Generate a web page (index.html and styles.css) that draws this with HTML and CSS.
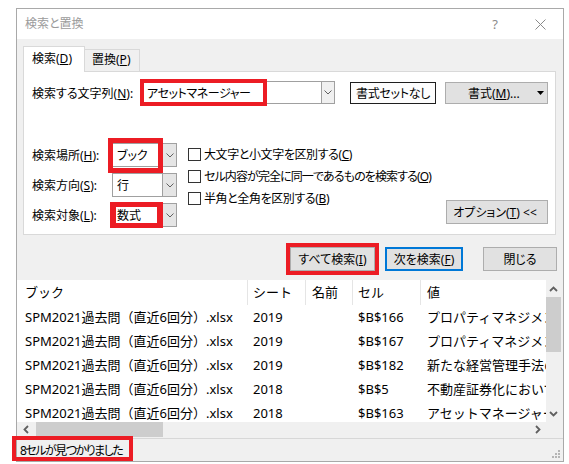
FILE: index.html
```html
<!DOCTYPE html>
<html lang="ja">
<head>
<meta charset="utf-8">
<title>検索と置換</title>
<link rel="stylesheet" href="styles.css">
</head>
<body>
<div class="dialog">
  <div class="titlebar">
    <span class="title">検索と置換</span>
    <span class="tb-btn help">?</span>
    <span class="tb-btn close"><svg width="11" height="11" viewBox="0 0 11 11"><path d="M0.5 0.5 L10.5 10.5 M10.5 0.5 L0.5 10.5" stroke="#8a8a8a" stroke-width="1" fill="none"/></svg></span>
  </div>

  <div class="tabs">
    <div class="tab active">検索(<u>D</u>)</div>
    <div class="tab">置換(<u>P</u>)</div>
  </div>

  <div class="panel">
    <div class="find-row">
      <span class="find-label">検索する文字列(<u>N</u>):</span>
      <div class="combo combo-find">
        <span class="combo-text">アセットマネージャー</span>
        <span class="combo-btn"><svg width="8" height="5" viewBox="0 0 8 5"><polyline points="0.5,0.5 4,4 7.5,0.5" fill="none" stroke="#606060" stroke-width="1"/></svg></span>
      </div>
      <button class="btn btn-noformat">書式セットなし</button>
      <button class="btn btn-format"><span>書式(<u>M</u>)...</span><svg class="caret" width="7" height="4" viewBox="0 0 7 4"><polygon points="0,0 7,0 3.5,4" fill="#000"/></svg></button>
    </div>

    <div class="options">
      <div class="opt-grid">
        <span class="opt-label">検索場所(<u>H</u>):</span>
        <div class="combo combo-small">
          <span class="combo-text">ブック</span>
          <span class="combo-btn"><svg width="8" height="5" viewBox="0 0 8 5"><polyline points="0.5,0.5 4,4 7.5,0.5" fill="none" stroke="#606060" stroke-width="1"/></svg></span>
        </div>
        <span class="opt-label">検索方向(<u>S</u>):</span>
        <div class="combo combo-small">
          <span class="combo-text">行</span>
          <span class="combo-btn"><svg width="8" height="5" viewBox="0 0 8 5"><polyline points="0.5,0.5 4,4 7.5,0.5" fill="none" stroke="#606060" stroke-width="1"/></svg></span>
        </div>
        <span class="opt-label">検索対象(<u>L</u>):</span>
        <div class="combo combo-small">
          <span class="combo-text">数式</span>
          <span class="combo-btn"><svg width="8" height="5" viewBox="0 0 8 5"><polyline points="0.5,0.5 4,4 7.5,0.5" fill="none" stroke="#606060" stroke-width="1"/></svg></span>
        </div>
      </div>

      <div class="checks">
        <div class="check"><span class="box"></span><span class="check-label">大文字と小文字を区別する(<u>C</u>)</span></div>
        <div class="check"><span class="box"></span><span class="check-label tight">セル内容が完全に同一であるものを検索する(<u>O</u>)</span></div>
        <div class="check"><span class="box"></span><span class="check-label">半角と全角を区別する(<u>B</u>)</span></div>
      </div>

      <button class="btn btn-options">オプション(<u>T</u>) &lt;&lt;</button>
    </div>
  </div>

  <div class="actions">
    <button class="btn btn-findall">すべて検索(<u>I</u>)</button>
    <button class="btn btn-next">次を検索(<u>F</u>)</button>
    <button class="btn btn-close">閉じる</button>
  </div>

  <div class="results">
    <div class="view">
      <div class="row head">
        <span class="cell c1">ブック</span>
        <span class="cell c2">シート</span>
        <span class="cell c3">名前</span>
        <span class="cell c4">セル</span>
        <span class="cell c5">値</span>
      </div>
      <div class="row">
        <span class="cell c1">SPM2021過去問（直近6回分）.xlsx</span>
        <span class="cell c2">2019</span>
        <span class="cell c3"></span>
        <span class="cell c4">$B$166</span>
        <span class="cell c5">プロパティマネジメント</span>
      </div>
      <div class="row">
        <span class="cell c1">SPM2021過去問（直近6回分）.xlsx</span>
        <span class="cell c2">2019</span>
        <span class="cell c3"></span>
        <span class="cell c4">$B$167</span>
        <span class="cell c5">プロパティマネジメント</span>
      </div>
      <div class="row">
        <span class="cell c1">SPM2021過去問（直近6回分）.xlsx</span>
        <span class="cell c2">2019</span>
        <span class="cell c3"></span>
        <span class="cell c4">$B$182</span>
        <span class="cell c5">新たな経営管理手法の</span>
      </div>
      <div class="row">
        <span class="cell c1">SPM2021過去問（直近6回分）.xlsx</span>
        <span class="cell c2">2018</span>
        <span class="cell c3"></span>
        <span class="cell c4">$B$5</span>
        <span class="cell c5">不動産証券化において</span>
      </div>
      <div class="row">
        <span class="cell c1">SPM2021過去問（直近6回分）.xlsx</span>
        <span class="cell c2">2018</span>
        <span class="cell c3"></span>
        <span class="cell c4">$B$163</span>
        <span class="cell c5">アセットマネージャー</span>
      </div>
    </div>
    <div class="vscroll">
      <span class="arrow"><svg width="9" height="6" viewBox="0 0 9 6"><polyline points="1,5 4.5,1.5 8,5" fill="none" stroke="#606060" stroke-width="1.8"/></svg></span>
      <span class="vthumb"></span>
      <span class="fill"></span>
      <span class="arrow"><svg width="9" height="6" viewBox="0 0 9 6"><polyline points="1,1 4.5,4.5 8,1" fill="none" stroke="#606060" stroke-width="1.8"/></svg></span>
    </div>
    <div class="hscroll">
      <span class="arrow"><svg width="6" height="9" viewBox="0 0 6 9"><polyline points="5,1 1.5,4.5 5,8" fill="none" stroke="#606060" stroke-width="1.8"/></svg></span>
      <span class="hthumb"></span>
      <span class="fill"></span>
      <span class="arrow"><svg width="6" height="9" viewBox="0 0 6 9"><polyline points="1,1 4.5,4.5 1,8" fill="none" stroke="#606060" stroke-width="1.8"/></svg></span>
    </div>
    <div class="corner"></div>
  </div>

  <div class="statusbar">
    <span class="status-text">8セルが見つかりました</span>
    <svg class="grip" width="10" height="10" viewBox="0 0 10 10">
      <rect x="7" y="1" width="2" height="2" fill="#b5b5b5"/>
      <rect x="4" y="4" width="2" height="2" fill="#b5b5b5"/>
      <rect x="7" y="4" width="2" height="2" fill="#b5b5b5"/>
      <rect x="1" y="7" width="2" height="2" fill="#b5b5b5"/>
      <rect x="4" y="7" width="2" height="2" fill="#b5b5b5"/>
      <rect x="7" y="7" width="2" height="2" fill="#b5b5b5"/>
    </svg>
  </div>
</div>

<div class="mark mark-find"></div>
<div class="mark mark-book"></div>
<div class="mark mark-formula"></div>
<div class="mark mark-findall"></div>
<div class="mark mark-status"></div>
</body>
</html>
```

FILE: styles.css
```css
html, body {
  margin: 0;
  padding: 0;
  background: #ffffff;
}

body {
  font-family: "Noto Sans", "Noto Sans CJK JP", sans-serif;
  font-size: 12px;
  color: #000;
  width: 569px;
  height: 464px;
  overflow: hidden;
}

u {
  text-decoration: underline;
  text-underline-offset: 1px;
  text-decoration-thickness: 1px;
}

.dialog {
  box-sizing: border-box;
  width: 548px;
  margin: 8px 0 0 16px;
  border: 1px solid #a9a9a9;
  background: #f0f0f0;
  font-feature-settings: "palt";
}

/* title bar */
.titlebar {
  height: 30px;
  background: #ffffff;
  display: flex;
  align-items: center;
}
.title {
  flex: 1;
  padding-left: 8px;
  color: #9b9b9b;
  line-height: 30px;
}
.tb-btn {
  height: 30px;
  display: flex;
  align-items: center;
  justify-content: center;
  color: #8a8a8a;
}
.help {
  width: 44px;
  font-size: 13px;
}
.close {
  width: 46px;
}

/* tabs */
.tabs {
  display: flex;
  align-items: flex-end;
  height: 25px;
  margin: 7px 0 0 6px;
  position: relative;
  z-index: 1;
}
.tab {
  box-sizing: border-box;
  height: 22px;
  width: 56px;
  margin-left: -1px;
  padding-left: 7px;
  border: 1px solid #d9d9d9;
  border-bottom: none;
  background: #f0f0f0;
  line-height: 20px;
  white-space: nowrap;
}
.tab.active {
  height: 26px;
  width: 62px;
  margin-left: 0;
  margin-bottom: -1px;
  padding-left: 8px;
  background: #ffffff;
  line-height: 24px;
}

/* panel */
.panel {
  box-sizing: border-box;
  width: 533px;
  height: 164px;
  margin-left: 6px;
  border: 1px solid #d9d9d9;
  background: #ffffff;
  padding: 9px 7px 0 8px;
}

.find-row {
  display: flex;
  align-items: center;
  height: 23px;
}
.find-label {
  width: 110px;
  white-space: nowrap;
}

.combo {
  box-sizing: border-box;
  display: flex;
  align-items: stretch;
  border: 1px solid #a0a0a0;
  background: #ffffff;
}
.combo-text {
  flex: 1;
  padding-left: 4px;
  display: flex;
  align-items: center;
  white-space: nowrap;
  overflow: hidden;
}
.combo-find .combo-text {
  letter-spacing: -0.4px;
}
.combo-btn {
  box-sizing: border-box;
  width: 13px;
  border-left: 1px solid #a0a0a0;
  background: #f0f0f0;
  display: flex;
  align-items: center;
  justify-content: center;
}
.combo-find {
  width: 193px;
  height: 23px;
}
.combo-small {
  width: 65px;
  height: 24px;
}
.combo-small .combo-btn {
  width: 14px;
  background: #e5e5e5;
}

.btn {
  box-sizing: border-box;
  font-family: inherit;
  font-size: 12px;
  font-feature-settings: "palt";
  color: #000;
  margin: 0;
  padding: 0;
  border: 1px solid #adadad;
  background: #e1e1e1;
  white-space: nowrap;
  display: flex;
  align-items: center;
  justify-content: center;
}
.btn-noformat {
  margin-left: 15px;
  width: 86px;
  height: 22px;
  border-color: #1e1e1e;
  background: #fdfdfd;
  letter-spacing: -0.3px;
}
.btn-format {
  margin-left: 9px;
  width: 103px;
  height: 22px;
  justify-content: flex-start;
  padding-left: 22px;
  padding-right: 3px;
}
.btn-format .caret {
  margin-left: auto;
}

/* options */
.options {
  display: flex;
  align-items: flex-start;
  margin-top: 39px;
}
.opt-grid {
  display: grid;
  grid-template-columns: 80px 65px;
  grid-auto-rows: 24px;
  row-gap: 6px;
  align-items: center;
}
.opt-label {
  white-space: nowrap;
}
.checks {
  margin-left: 11px;
  display: flex;
  flex-direction: column;
}
.check {
  height: 22px;
  display: flex;
  align-items: center;
  white-space: nowrap;
}
.check-label {
  letter-spacing: -0.4px;
}
.check-label.tight {
  letter-spacing: -0.9px;
}
.box {
  box-sizing: border-box;
  width: 13px;
  height: 13px;
  border: 1px solid #333333;
  background: #ffffff;
  margin-right: 3px;
  flex: none;
}
.btn-options {
  margin-left: auto;
  align-self: flex-end;
  margin-bottom: 3px;
  width: 102px;
  height: 24px;
  padding-right: 4px;
}

/* action buttons */
.actions {
  display: flex;
  justify-content: flex-end;
  height: 24px;
  margin-top: 12px;
  padding-right: 6px;
}
.btn-findall {
  width: 85px;
  height: 24px;
  margin-right: 10px;
}
.btn-next {
  width: 78px;
  height: 24px;
  margin-right: 20px;
  border: 2px solid #0078d7;
}
.btn-close {
  width: 74px;
  height: 24px;
}

/* results list */
.results {
  margin-top: 9px;
  width: 544px;
  height: 157px;
  display: grid;
  grid-template-columns: 529px 15px;
  grid-template-rows: 142px 15px;
  background: #ffffff;
}
.view {
  overflow: hidden;
  font-size: 13px;
  font-feature-settings: normal;
}
.row {
  display: grid;
  grid-template-columns: 230px 58px 47px 68px 300px;
  height: 24px;
  line-height: 24px;
  white-space: nowrap;
}
.row.head {
  height: 25px;
  line-height: 25px;
}
.cell {
  box-sizing: border-box;
  padding-left: 6px;
  overflow: visible;
}
.cell.c1 {
  padding-left: 8px;
}
.cell.c3,
.cell.c5 {
  padding-left: 7px;
}
.head .cell.c2,
.head .cell.c3,
.head .cell.c4,
.head .cell.c5 {
  border-left: 1px solid #e5e5e5;
}
.head .cell.c2,
.head .cell.c4 {
  padding-left: 5px;
}
.head .cell.c3,
.head .cell.c5 {
  padding-left: 6px;
}

.vscroll {
  background: #f0f0f0;
  display: flex;
  flex-direction: column;
}
.vscroll .arrow {
  height: 17px;
  display: flex;
  align-items: center;
  justify-content: center;
  flex: none;
}
.vthumb {
  height: 55px;
  background: #cdcdcd;
  flex: none;
}
.fill {
  flex: 1;
}
.hscroll {
  background: #f0f0f0;
  display: flex;
}
.hscroll .arrow {
  width: 17px;
  display: flex;
  align-items: center;
  justify-content: center;
  flex: none;
}
.hthumb {
  width: 127px;
  margin-left: 2px;
  background: #cdcdcd;
  flex: none;
}
.corner {
  background: #f0f0f0;
}

/* status bar */
.statusbar {
  margin-top: 1px;
  border-top: 1px solid #d7d7d7;
  height: 22px;
  display: flex;
  align-items: center;
  padding-left: 3px;
}
.status-text {
  white-space: nowrap;
  letter-spacing: -1.5px;
}
.grip {
  margin-left: auto;
  margin-right: 2px;
  align-self: flex-end;
  margin-bottom: 2px;
}

/* red annotation frames drawn over the screenshot */
.mark {
  position: absolute;
  box-sizing: border-box;
  border: 4px solid #ec1c24;
  pointer-events: none;
}
.mark-find {
  left: 140px;
  top: 79px;
  width: 127px;
  height: 27px;
}
.mark-book {
  left: 108px;
  top: 138px;
  width: 55px;
  height: 35px;
  border-width: 5px;
}
.mark-formula {
  left: 110px;
  top: 202px;
  width: 53px;
  height: 26px;
  border-width: 5px 6px 5px 6px;
}
.mark-findall {
  left: 286px;
  top: 243px;
  width: 93px;
  height: 32px;
}
.mark-status {
  left: 12px;
  top: 436px;
  width: 121px;
  height: 25px;
}
```
